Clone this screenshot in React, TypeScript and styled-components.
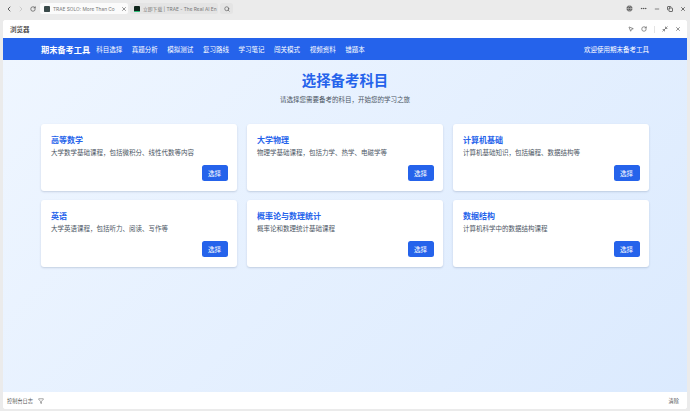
import styled, { createGlobalStyle } from "styled-components"
import { ChevronLeft, ChevronRight, RotateCw, X, Search, Globe, MoreHorizontal, Minus, Copy, MousePointer2, Minimize2, Filter } from "lucide-react"

const GlobalStyle = createGlobalStyle`
    html, body {
        margin: 0;
        padding: 0;
        width: 690px;
        height: 411px;
        overflow: hidden;
        background: #ededed;
        font-family: Inter, "Noto Sans CJK SC", sans-serif;
    }
    * { box-sizing: border-box; }
`

const Screen = styled.div`
    width: 690px;
    height: 411px;
    display: flex;
    flex-direction: column;
    background: #ebebeb;
`

const TabBar = styled.div`
    height: 20px;
    flex-shrink: 0;
    display: flex;
    align-items: flex-start;
    padding: 3px 4px 0 3px;
    color: #555;
`

const ChromeButton = styled.div<{ $faded?: boolean }>`
    width: 12px;
    height: 10px;
    margin-right: 1px;
    display: flex;
    align-items: center;
    justify-content: center;
    color: ${({ $faded }) => ($faded ? "#bbb" : "#444")};
`

const NavButtons = styled.div`
    width: 37px;
    display: flex;
    padding-top: 1px;
    flex-shrink: 0;
`

const Tab = styled.div<{ $active?: boolean }>`
    width: 88px;
    height: 11px;
    margin-right: 2px;
    padding: 0 1px 0 4px;
    display: flex;
    align-items: center;
    gap: 3px;
    border-radius: 2.5px;
    background: ${({ $active }) => ($active ? "#fbfbfb" : "#e4e4e4")};
    flex-shrink: 0;
`

const Favicon = styled.span<{ $dark?: boolean }>`
    width: 6px;
    height: 6px;
    flex-shrink: 0;
    border-radius: 1px;
    background: ${({ $dark }) => ($dark ? "#10261c" : "#3a4a4a")};
    border-bottom: 1px solid ${({ $dark }) => ($dark ? "#2fc27b" : "#3a4a4a")};
`

const TabLabel = styled.span`
    flex: 1;
    white-space: nowrap;
    font-size: 4.8px;
    color: #777;
`

const SearchTab = styled.div`
    width: 13px;
    height: 11px;
    border-radius: 2.5px;
    background: #e4e4e4;
    display: flex;
    align-items: center;
    justify-content: center;
    color: #555;
`

const WindowControls = styled.div`
    margin-left: auto;
    display: flex;
    align-items: center;
    gap: 7px;
    height: 11px;
    color: #444;
`

const Panel = styled.div`
    flex: 1;
    margin: 0 3px 2px 3px;
    display: flex;
    flex-direction: column;
    border-radius: 3px;
    overflow: hidden;
    background: #fff;
    min-height: 0;
`

const PanelHeader = styled.div`
    height: 18px;
    flex-shrink: 0;
    display: flex;
    align-items: center;
    justify-content: space-between;
    padding: 0 6px 0 7px;
    background: #fff;
    font-size: 6.5px;
    font-weight: 500;
    color: #333;
`

const PanelTools = styled.div`
    display: flex;
    align-items: center;
    gap: 7px;
    color: #555;
`

const ToolDivider = styled.span`
    width: 1px;
    height: 7px;
    background: #e4e4e4;
`

const NavBar = styled.nav`
    height: 22px;
    flex-shrink: 0;
    display: flex;
    align-items: center;
    justify-content: space-between;
    padding: 0 38px;
    background: #2563eb;
    color: #fff;
`

const NavLeft = styled.div`
    display: flex;
    align-items: center;
`

const Brand = styled.div`
    font-size: 8.2px;
    font-weight: 700;
    margin-right: 6px;
`

const NavLinks = styled.div`
    display: flex;
    gap: 9.6px;
    font-size: 6.5px;
`

const Welcome = styled.div`
    font-size: 6.5px;
`

const Content = styled.main`
    flex: 1;
    min-height: 0;
    padding: 12px 38px 0;
    background: linear-gradient(135deg, #eff6ff, #dbeafe);
`

const PageTitle = styled.h1`
    margin: 0;
    text-align: center;
    font-size: 14.4px;
    line-height: 18px;
    font-weight: 700;
    color: #2563eb;
`

const PageSubtitle = styled.p`
    margin: 5.5px 0 0;
    text-align: center;
    font-size: 6.5px;
    line-height: 9px;
    color: #4b5563;
`

const CardGrid = styled.div`
    margin-top: 19.5px;
    display: grid;
    grid-template-columns: repeat(3, 196px);
    grid-auto-rows: 66.5px;
    gap: 9.5px 10px;
`

const Card = styled.div`
    padding: 10.5px 9.5px 9.5px 10px;
    display: flex;
    flex-direction: column;
    border-radius: 3px;
    background: #fff;
    box-shadow: 0 1px 2px rgba(60, 80, 120, 0.22);
`

const CardTitle = styled.h3`
    margin: 0;
    font-size: 8px;
    line-height: 11px;
    font-weight: 700;
    color: #2563eb;
`

const CardText = styled.p`
    margin: 3.5px 0 0;
    font-size: 6.5px;
    line-height: 9px;
    color: #4b5563;
`

const SelectButton = styled.button`
    margin-top: auto;
    align-self: flex-end;
    width: 26px;
    height: 16.5px;
    padding: 0;
    border: none;
    border-radius: 2.5px;
    background: #2563eb;
    color: #fff;
    font-family: inherit;
    font-size: 6.5px;
`

const ConsoleBar = styled.div`
    height: 17px;
    flex-shrink: 0;
    display: flex;
    align-items: center;
    justify-content: space-between;
    padding: 0 8px 0 4px;
    background: #fff;
    font-size: 5.2px;
    color: #555;
`

const ConsoleLeft = styled.div`
    display: flex;
    align-items: center;
    gap: 5px;
`

const navItems = ["科目选择", "真题分析", "模拟测试", "复习路线", "学习笔记", "闯关模式", "视频资料", "错题本"]

const subjects = [
    { title: "高等数学", text: "大学数学基础课程，包括微积分、线性代数等内容" },
    { title: "大学物理", text: "物理学基础课程，包括力学、热学、电磁学等" },
    { title: "计算机基础", text: "计算机基础知识，包括编程、数据结构等" },
    { title: "英语", text: "大学英语课程，包括听力、阅读、写作等" },
    { title: "概率论与数理统计", text: "概率论和数理统计基础课程" },
    { title: "数据结构", text: "计算机科学中的数据结构课程" },
]

export default function App() {
    return (
        <Screen>
            <GlobalStyle />
            <TabBar>
                <NavButtons>
                    <ChromeButton><ChevronLeft size={8} strokeWidth={2.5} /></ChromeButton>
                    <ChromeButton $faded><ChevronRight size={8} /></ChromeButton>
                    <ChromeButton><RotateCw size={6} strokeWidth={2.5} /></ChromeButton>
                </NavButtons>
                <Tab $active>
                    <Favicon />
                    <TabLabel>TRAE SOLO: More Than Co</TabLabel>
                    <X size={6} color="#555" strokeWidth={2.5} />
                </Tab>
                <Tab>
                    <Favicon $dark />
                    <TabLabel>立即下载 | TRAE - The Real AI En</TabLabel>
                </Tab>
                <SearchTab><Search size={6} strokeWidth={2.5} /></SearchTab>
                <WindowControls>
                    <Globe size={7} fill="#444" color="#ccc" />
                    <MoreHorizontal size={7} strokeWidth={2.5} />
                    <Minus size={6} strokeWidth={2.5} />
                    <Copy size={6} strokeWidth={3} />
                    <X size={6} strokeWidth={3} />
                </WindowControls>
            </TabBar>
            <Panel>
                <PanelHeader>
                    浏览器
                    <PanelTools>
                        <MousePointer2 size={6} strokeWidth={2.5} />
                        <RotateCw size={6} strokeWidth={2.5} />
                        <ToolDivider />
                        <Minimize2 size={6} strokeWidth={2.5} />
                        <X size={6} strokeWidth={2.5} />
                    </PanelTools>
                </PanelHeader>
                <NavBar>
                    <NavLeft>
                        <Brand>期末备考工具</Brand>
                        <NavLinks>
                            {navItems.map(item => <span key={item}>{item}</span>)}
                        </NavLinks>
                    </NavLeft>
                    <Welcome>欢迎使用期末备考工具</Welcome>
                </NavBar>
                <Content>
                    <PageTitle>选择备考科目</PageTitle>
                    <PageSubtitle>请选择您需要备考的科目，开始您的学习之旅</PageSubtitle>
                    <CardGrid>
                        {subjects.map(subject => (
                            <Card key={subject.title}>
                                <CardTitle>{subject.title}</CardTitle>
                                <CardText>{subject.text}</CardText>
                                <SelectButton>选择</SelectButton>
                            </Card>
                        ))}
                    </CardGrid>
                </Content>
                <ConsoleBar>
                    <ConsoleLeft>
                        控制台日志
                        <Filter size={6} />
                    </ConsoleLeft>
                    <span>清除</span>
                </ConsoleBar>
            </Panel>
        </Screen>
    )
}
